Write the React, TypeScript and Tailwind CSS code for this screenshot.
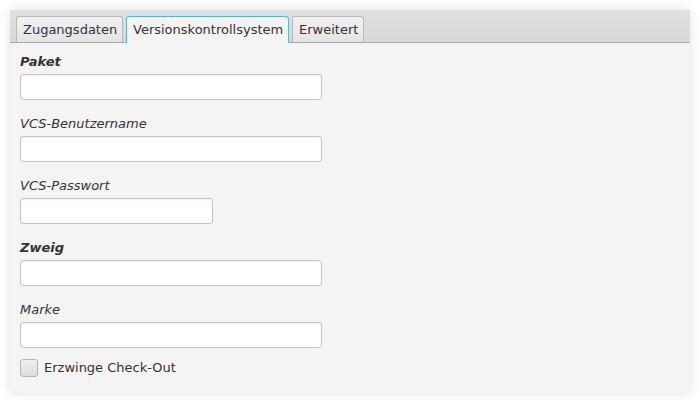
import React from "react";

const font = { fontFamily: '"DejaVu Sans", Verdana, sans-serif' };

function Field({ label, bold, width }: { label: string; bold?: boolean; width: string }) {
  return (
    <div className="flex flex-col">
      <div className={`h-[18px] leading-[18px] text-[13px] italic text-[#333] ${bold ? "font-bold" : ""}`}>{label}</div>
      <div className={`mt-[3px] h-[26px] ${width} bg-white border border-[#c3c3c3] rounded-[3px] shadow-[inset_0_1px_2px_rgba(0,0,0,0.06)]`} />
    </div>
  );
}

export default function App() {
  return (
    <div className="w-[700px] h-[401px] bg-white p-[10px]" style={font}>
      <div className="w-[680px] h-[383px] bg-[#f4f4f4] shadow-[0_0_10px_rgba(0,0,0,0.12)] flex flex-col">
        <div className="h-[33px] bg-gradient-to-b from-[#e0e0e0] to-[#d9d9d9] border-b border-[#a9a9a9] flex items-end pl-[6px] gap-[3px]">
          <div className="h-[26px] px-[6px] flex items-center text-[13px] text-[#333] border border-b-0 border-[#b8b8b8] rounded-t-[3px] bg-gradient-to-b from-[#f2f2f2] to-[#e4e4e4] w-[107px]">Zugangsdaten</div>
          <div className="h-[27px] -mb-[1px] px-[6px] flex items-center text-[13px] text-[#333] border border-b-0 border-[#5db3e0] rounded-t-[3px] bg-[#f4f4f4] w-[163px] pb-[1px]">Versionskontrollsystem</div>
          <div className="h-[26px] px-[6px] flex items-center text-[13px] text-[#333] border border-b-0 border-[#b8b8b8] rounded-t-[3px] bg-gradient-to-b from-[#f2f2f2] to-[#e4e4e4] w-[72px]">Erweitert</div>
        </div>
        <div className="pl-[10px] pt-[10px] flex flex-col gap-[15px]">
          <Field label="Paket" bold width="w-[302px]" />
          <Field label="VCS-Benutzername" width="w-[302px]" />
          <Field label="VCS-Passwort" width="w-[193px]" />
          <Field label="Zweig" bold width="w-[302px]" />
          <div className="flex flex-col">
            <Field label="Marke" width="w-[302px]" />
            <div className="mt-[10px] flex items-center gap-[6px]">
              <div className="w-[18px] h-[18px] rounded-[3px] border border-[#b5b5b5] bg-gradient-to-b from-[#f0f0f0] to-[#dcdcdc]" />
              <span className="text-[13px] text-[#333]">Erzwinge Check-Out</span>
            </div>
          </div>
        </div>
      </div>
    </div>
  );
}
